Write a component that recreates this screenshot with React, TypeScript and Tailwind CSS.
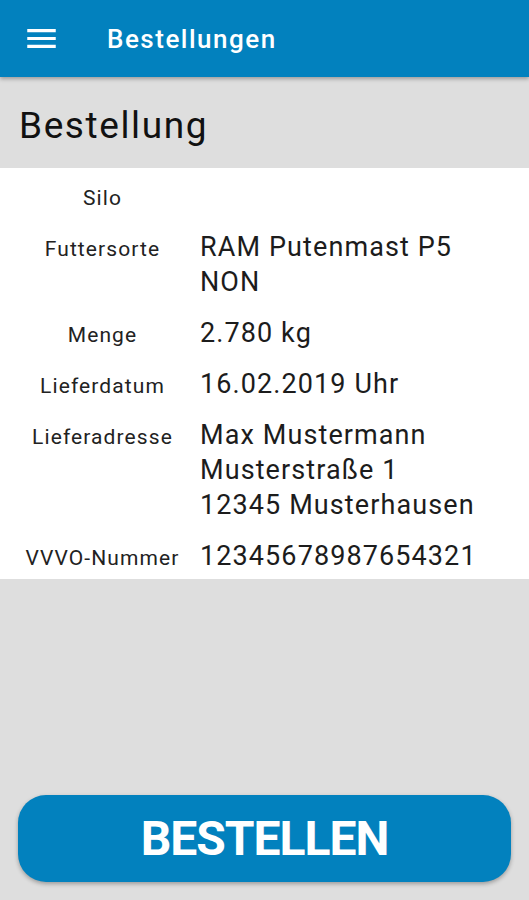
import React from "react";

const rows: { label: string; value: string[] }[] = [
  { label: "Silo", value: [] },
  { label: "Futtersorte", value: ["RAM Putenmast P5", "NON"] },
  { label: "Menge", value: ["2.780 kg"] },
  { label: "Lieferdatum", value: ["16.02.2019 Uhr"] },
  { label: "Lieferadresse", value: ["Max Mustermann", "Musterstraße 1", "12345 Musterhausen"] },
  { label: "VVVO-Nummer", value: ["12345678987654321"] },
];

function MenuIcon() {
  return (
    <svg width="29" height="19" viewBox="3 6 18 12" fill="white" aria-hidden="true">
      <path d="M3 18h18v-2H3v2zm0-5h18v-2H3v2zm0-7v2h18V6H3z" />
    </svg>
  );
}

export default function App() {
  return (
    <div
      className="flex h-[900px] w-[529px] flex-col bg-[#dedede]"
      style={{ fontFamily: "Roboto, 'Noto Sans', sans-serif" }}
    >
      {/* toolbar */}
      <header className="relative z-10 flex h-[77px] shrink-0 items-center bg-[#0281be] shadow-[0_2px_4px_rgba(0,0,0,0.3)]">
        <div className="ml-[27px] flex">
          <MenuIcon />
        </div>
        <h1 className="ml-[51px] text-[26px] font-medium leading-[26px] tracking-[1.5px] text-white">Bestellungen</h1>
      </header>

      {/* section title */}
      <div className="h-[91px] shrink-0 pl-[19px] pt-[31px]">
        <h2 className="text-[37px] leading-[36px] tracking-[1.6px] text-[#111]">Bestellung</h2>
      </div>

      {/* details */}
      <div className="flex shrink-0 flex-col gap-[16px] bg-white pb-[5px] pt-[11px]">
        {rows.map(row => (
          <div key={row.label} className="flex min-h-[35px] items-baseline">
            <div className="w-[200px] shrink-0 pl-[5px] text-center text-[21px] leading-[30px] tracking-[1.1px] text-[#222]">
              {row.label}
            </div>
            <div className="text-[27px] leading-[35px] tracking-[1.1px] text-[#1c1c1c]">
              {row.value.length === 0 ? "\u00a0" : row.value.map(line => <div key={line}>{line}</div>)}
            </div>
          </div>
        ))}
      </div>

      <div className="flex-1" />

      <div className="px-[18px] pb-[18px]">
        <button
          type="button"
          className="flex h-[87px] w-full items-center justify-center rounded-[28px] bg-[#0281be] text-[48px] font-bold leading-none tracking-[-1px] text-white shadow-[0_2px_4px_rgba(0,0,0,0.3)]"
        >
          BESTELLEN
        </button>
      </div>
    </div>
  );
}
